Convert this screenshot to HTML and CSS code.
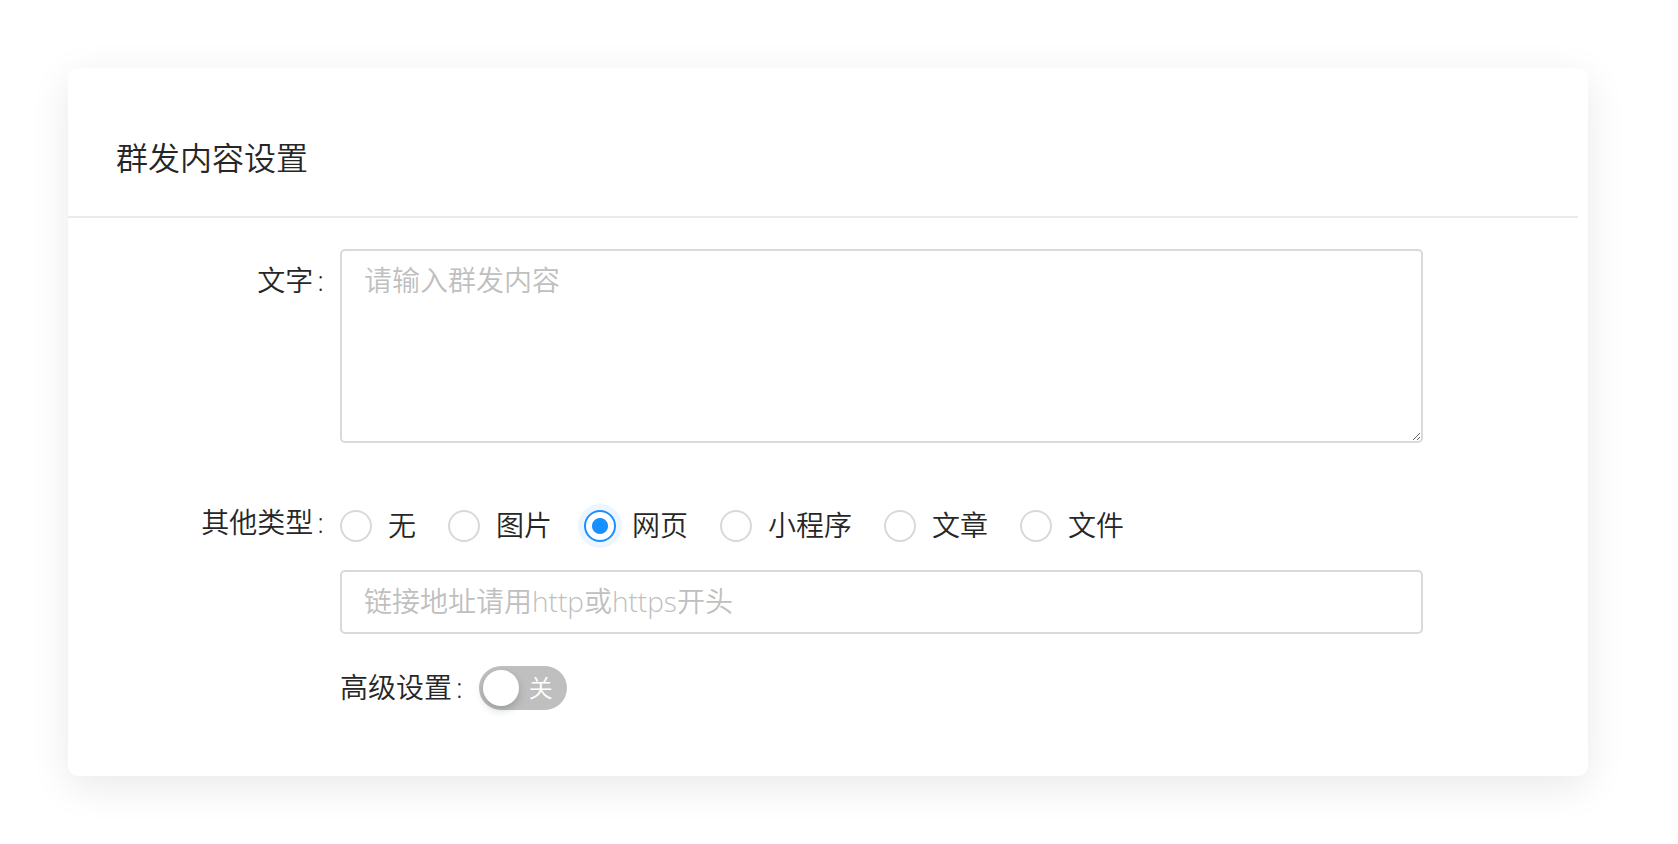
FILE: index.html
```html
<!DOCTYPE html>
<html lang="zh-CN">
<head>
	<meta charset="UTF-8">
	<meta name="viewport" content="width=device-width, initial-scale=1">
	<title>群发内容设置</title>
	<link rel="stylesheet" href="styles.css">
</head>
<body>
	<div class="card">
		<div class="card__head">
			<h2 class="card__title">群发内容设置</h2>
		</div>
		<form class="card__body form" name="mass">
			<div class="form__row form__row--text">
				<label class="form__label" for="mass_text">文字</label>
				<div class="form__control">
					<textarea class="form__area" id="mass_text" name="text" placeholder="请输入群发内容"></textarea>
				</div>
			</div>

			<div class="form__row form__row--type">
				<span class="form__label">其他类型</span>
				<div class="form__control radio-group">
					<label class="radio"><input type="radio" name="type" value="none"><span>无</span></label>
					<label class="radio"><input type="radio" name="type" value="image"><span>图片</span></label>
					<label class="radio"><input type="radio" name="type" value="link" checked><span>网页</span></label>
					<label class="radio"><input type="radio" name="type" value="miniapp"><span>小程序</span></label>
					<label class="radio"><input type="radio" name="type" value="article"><span>文章</span></label>
					<label class="radio"><input type="radio" name="type" value="file"><span>文件</span></label>
				</div>
			</div>

			<div class="form__row">
				<span></span>
				<div class="form__control">
					<input class="form__input" type="text" name="url" placeholder="链接地址请用http或https开头">
					<div class="form__inline">
						<span class="form__label">高级设置</span>
						<button class="switch" type="button" name="advanced">
							<span class="switch__handle"></span>
							<span class="switch__inner">关</span>
						</button>
					</div>
				</div>
			</div>
		</form>
	</div>
</body>
</html>
```

FILE: styles.css
```css
body {
	margin: 0;
	padding: 68px 90px 68px 68px;
	background: #fff;
	color: #262626;
	font-family: "Open Sans", "Noto Sans CJK SC", sans-serif;
	font-size: 28px;
	font-weight: 350;
}

.card {
	width: 1520px;
	background: #fff;
	border-radius: 10px;
	box-shadow: 0 10px 40px rgba(0, 0, 0, 0.09);
}
.card__head {
	padding: 66px 48px 34px;
	margin-right: 10px;
	border-bottom: 2px solid #ebebeb;
}
.card__title {
	margin: 0;
	font-size: 32px;
	font-weight: 350;
	line-height: 48px;
}
.card__body {
	padding: 31px 0 56px;
}

.form__row {
	display: grid;
	grid-template-columns: 272px 1083px;
}
.form__row--text { margin-bottom: 48px; }
.form__row--type { margin-bottom: 12px; }

.form__label {
	text-align: right;
	line-height: 62px;
	padding-bottom: 2px;
	white-space: nowrap;
}
.form__label::after {
	content: ":";
	margin: 0 16px 0 4px;
}

.form__area,
.form__input {
	display: block;
	box-sizing: border-box;
	width: 100%;
	border: 2px solid #d9d9d9;
	border-radius: 5px;
	padding: 7px 22px 9px;
	font: inherit;
	line-height: 44px;
	color: #262626;
	background: #fff;
	outline: none;
}
.form__area {
	height: 194px;
	resize: vertical;
}
.form__input {
	height: 64px;
	margin-bottom: 22px;
}
.form__area::placeholder,
.form__input::placeholder { color: #bfbfbf; }

.radio-group {
	display: flex;
	align-items: center;
	height: 64px;
	padding-top: 3px;
}
.radio {
	display: inline-flex;
	align-items: center;
	margin-right: 16px;
	cursor: pointer;
}
.radio input {
	appearance: none;
	-webkit-appearance: none;
	box-sizing: border-box;
	width: 32px;
	height: 32px;
	margin: 0;
	border: 2px solid #d9d9d9;
	border-radius: 50%;
	background: #fff;
	cursor: pointer;
}
.radio input:checked {
	border-color: #1890ff;
	background: radial-gradient(circle, #1890ff 7.5px, #fff 8.5px);
	box-shadow: 0 0 0 6px rgba(24, 144, 255, 0.08);
}
.radio span {
	padding: 0 16px 2px;
	line-height: 42px;
}

.form__inline {
	display: flex;
	align-items: center;
	height: 64px;
}

.switch {
	position: relative;
	display: inline-block;
	width: 88px;
	height: 44px;
	padding: 0;
	margin: 0;
	border: none;
	border-radius: 22px;
	background: #bfbfbf;
	font: inherit;
	cursor: pointer;
}
.switch__handle {
	position: absolute;
	top: 4px;
	left: 4px;
	width: 36px;
	height: 36px;
	border-radius: 50%;
	background: #fff;
	box-shadow: 0 4px 8px rgba(0, 35, 11, 0.2);
}
.switch__inner {
	display: block;
	margin: 0 14px 0 50px;
	color: #fff;
	font-size: 24px;
	line-height: 44px;
	text-align: left;
}
```
